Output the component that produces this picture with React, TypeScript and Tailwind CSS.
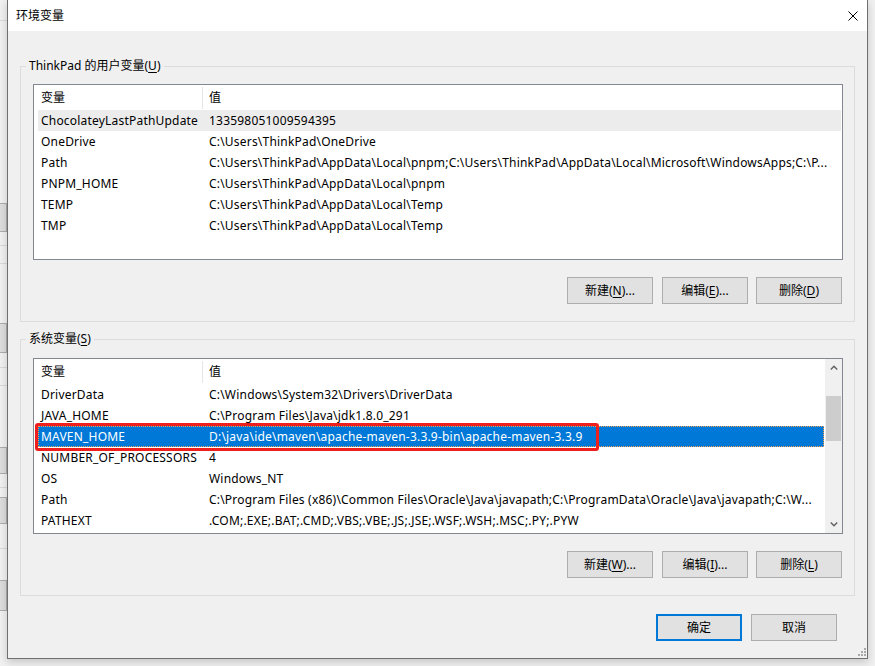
import type { ReactNode } from "react";

type Row = { name: string; value: string; state?: "muted" | "active" };

const userVars: Row[] = [
  { name: "ChocolateyLastPathUpdate", value: "133598051009594395", state: "muted" },
  { name: "OneDrive", value: "C:\\Users\\ThinkPad\\OneDrive" },
  {
    name: "Path",
    value:
      "C:\\Users\\ThinkPad\\AppData\\Local\\pnpm;C:\\Users\\ThinkPad\\AppData\\Local\\Microsoft\\WindowsApps;C:\\P...",
  },
  { name: "PNPM_HOME", value: "C:\\Users\\ThinkPad\\AppData\\Local\\pnpm" },
  { name: "TEMP", value: "C:\\Users\\ThinkPad\\AppData\\Local\\Temp" },
  { name: "TMP", value: "C:\\Users\\ThinkPad\\AppData\\Local\\Temp" },
];

const systemVars: Row[] = [
  { name: "DriverData", value: "C:\\Windows\\System32\\Drivers\\DriverData" },
  { name: "JAVA_HOME", value: "C:\\Program Files\\Java\\jdk1.8.0_291" },
  {
    name: "MAVEN_HOME",
    value: "D:\\java\\ide\\maven\\apache-maven-3.3.9-bin\\apache-maven-3.3.9",
    state: "active",
  },
  { name: "NUMBER_OF_PROCESSORS", value: "4" },
  { name: "OS", value: "Windows_NT" },
  {
    name: "Path",
    value:
      "C:\\Program Files (x86)\\Common Files\\Oracle\\Java\\javapath;C:\\ProgramData\\Oracle\\Java\\javapath;C:\\W...",
  },
  { name: "PATHEXT", value: ".COM;.EXE;.BAT;.CMD;.VBS;.VBE;.JS;.JSE;.WSF;.WSH;.MSC;.PY;.PYW" },
];

function Key({ k }: { k: string }) {
  return <span className="underline decoration-1 underline-offset-2">{k}</span>;
}

function WinButton({ children, primary }: { children: ReactNode; primary?: boolean }) {
  return (
    <button
      className={`flex h-[27px] w-[86px] shrink-0 items-center justify-center bg-[#e1e1e1] text-[12px] leading-[16px] text-black ${
        primary ? "border-2 border-[#0078d7]" : "border border-[#adadad]"
      }`}
    >
      {children}
    </button>
  );
}

function ListHeader() {
  return (
    <div className="flex h-[25px] shrink-0 items-center">
      <div className="w-[168px] shrink-0 pl-[7px]">变量</div>
      <div className="h-[22px] w-px bg-[#e5e5e5]" />
      <div className="pl-[6px]">值</div>
    </div>
  );
}

function VarRow({ row }: { row: Row }) {
  const active = row.state === "active";
  let tone = "";
  if (active) tone = "bg-[#0078d7] text-white outline-1 outline-dotted outline-[#f0a050] -outline-offset-1";
  if (row.state === "muted") tone = "bg-[#ececec]";
  return (
    <div
      className={`relative ml-[4px] mr-[1px] flex h-[21px] shrink-0 items-center whitespace-nowrap tracking-[0.2px] ${tone}`}
    >
      <div className="w-[164px] shrink-0 pl-[3px]">{row.name}</div>
      <div className="min-w-0 flex-1 overflow-hidden pl-[7px]">{row.value}</div>
      {active && (
        <div className="pointer-events-none absolute -left-[3px] -top-[3px] h-[28px] w-[564px] rounded-[3px] border-[3px] border-[#ee1f1c]" />
      )}
    </div>
  );
}

function Chevron({ down }: { down?: boolean }) {
  return (
    <svg width="8" height="5" viewBox="0 0 8 5" className={down ? "rotate-180" : ""}>
      <path d="M0.8 4.4 L4 1.2 L7.2 4.4" fill="none" stroke="#606060" strokeWidth="1.4" />
    </svg>
  );
}

function Scrollbar() {
  return (
    <div className="flex w-[17px] shrink-0 flex-col bg-[#f0f0f0]">
      <div className="flex h-[17px] items-center justify-center">
        <Chevron />
      </div>
      <div className="flex-1">
        <div className="mx-auto mt-[20px] h-[45px] w-[15px] bg-[#cdcdcd]" />
      </div>
      <div className="flex h-[17px] items-center justify-center">
        <Chevron down />
      </div>
    </div>
  );
}

function VarGroup({
  title,
  rows,
  scroll,
  buttons,
  className,
  listGap,
}: {
  title: ReactNode;
  rows: Row[];
  scroll?: boolean;
  buttons: ReactNode;
  className: string;
  listGap: string;
}) {
  return (
    <section className={`ml-[12px] flex w-[835px] flex-col border border-[#dcdcdc] pb-[17px] pl-[5px] ${className}`}>
      <div className="-mt-[9px] w-fit bg-[#f0f0f0] px-[3px] leading-[16px]">{title}</div>
      <div className={`ml-[7px] flex h-[176px] w-[810px] border border-[#828790] bg-white ${listGap}`}>
        <div className="flex min-w-0 flex-1 flex-col">
          <ListHeader />
          {rows.map((r) => (
            <VarRow key={r.name} row={r} />
          ))}
        </div>
        {scroll && <Scrollbar />}
      </div>
      <div className="ml-[7px] mt-[17px] flex w-[810px] justify-end gap-[9px] pr-px">{buttons}</div>
    </section>
  );
}

function BackWindow() {
  const line = "h-px bg-[#d9d9d9]";
  const block = "border-y border-r border-[#adadad] bg-[#dcdcdc]";
  return (
    <div className="flex h-full w-[7px] shrink-0 flex-col bg-[#f0f0f0]">
      <div className="h-[20px]" />
      <div className={line} />
      <div className="h-[182px]" />
      <div className={`h-[29px] ${block}`} />
      <div className="h-[13px]" />
      <div className={line} />
      <div className="h-[17px]" />
      <div className={line} />
      <div className="h-[59px]" />
      <div className={`h-[30px] ${block}`} />
      <div className="h-[14px]" />
      <div className={line} />
      <div className="h-[17px]" />
      <div className={line} />
      <div className="h-[61px]" />
      <div className={`h-[27px] ${block}`} />
      <div className="h-[13px]" />
      <div className={line} />
      <div className="h-[9px]" />
      <div className={`h-[27px] ${block}`} />
      <div className="h-[24px]" />
      <div className={line} />
      <div className="h-[31px]" />
      <div className={`h-[31px] ${block}`} />
    </div>
  );
}

export default function App() {
  return (
    <div className="flex h-[666px] w-[875px] items-start overflow-hidden bg-[#f0f0f0] font-['Noto_Sans','Noto_Sans_CJK_SC',sans-serif] text-[12px] leading-[16px] text-black">
      <BackWindow />
      <div className="flex h-[659px] w-[861px] shrink-0 flex-col border-x border-b border-[#6f6f6f] bg-[#f0f0f0] shadow-[0_3px_8px_rgba(0,0,0,0.18)]">
        <div className="flex h-[31px] shrink-0 items-center justify-between bg-white pl-[8px] pr-[9px]">
          <span>环境变量</span>
          <svg width="10" height="10" viewBox="0 0 10 10">
            <path d="M0.5 0.5 L9.5 9.5 M9.5 0.5 L0.5 9.5" stroke="#000" strokeWidth="1" />
          </svg>
        </div>

        <div className="flex flex-1 flex-col">
          <VarGroup
            className="mt-[35px]"
            listGap="mt-[10px]"
            title={
              <>
                ThinkPad 的用户变量(<Key k="U" />)
              </>
            }
            rows={userVars}
            buttons={
              <>
                <WinButton>
                  新建(<Key k="N" />)...
                </WinButton>
                <WinButton>
                  编辑(<Key k="E" />)...
                </WinButton>
                <div className="-ml-px">
                  <WinButton>
                    删除(<Key k="D" />)
                  </WinButton>
                </div>
              </>
            }
          />

          <VarGroup
            className="mt-[17px]"
            listGap="mt-[11px]"
            title={
              <>
                系统变量(<Key k="S" />)
              </>
            }
            rows={systemVars}
            scroll
            buttons={
              <>
                <WinButton>
                  新建(<Key k="W" />)...
                </WinButton>
                <WinButton>
                  编辑(<Key k="I" />)...
                </WinButton>
                <div className="-ml-px">
                  <WinButton>
                    删除(<Key k="L" />)
                  </WinButton>
                </div>
              </>
            }
          />

          <div className="flex flex-1 pb-[2px] pr-[1px]">
            <div className="ml-auto mt-[18px] flex gap-[9px]">
              <WinButton primary>确定</WinButton>
              <WinButton>取消</WinButton>
            </div>
            <svg width="9" height="9" viewBox="0 0 9 9" className="ml-[20px] self-end">
              <rect x="7" y="1" width="2" height="2" fill="#a8a8a8" />
              <rect x="4" y="4" width="2" height="2" fill="#a8a8a8" />
              <rect x="7" y="4" width="2" height="2" fill="#a8a8a8" />
              <rect x="1" y="7" width="2" height="2" fill="#a8a8a8" />
              <rect x="4" y="7" width="2" height="2" fill="#a8a8a8" />
              <rect x="7" y="7" width="2" height="2" fill="#a8a8a8" />
            </svg>
          </div>
        </div>
      </div>
    </div>
  );
}
